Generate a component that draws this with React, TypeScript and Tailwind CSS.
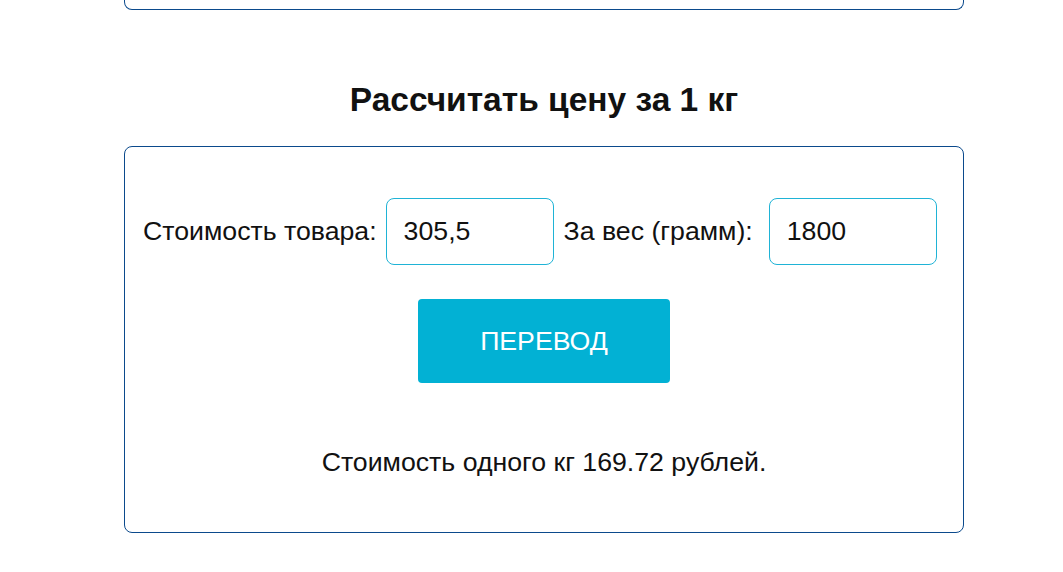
import React, { useState } from 'react';

export default function App() {
  const [price, setPrice] = useState('305,5');
  const [weight, setWeight] = useState('1800');

  return (
    <div className="min-h-screen bg-white font-['Liberation_Sans',Arial,sans-serif] text-[#111]">
      <div className="ml-[124px] w-[840px]">
        {/* previous block, scrolled off */}
        <div className="h-[10px] border border-t-0 border-[#0b4a8c] rounded-b-lg" />

        <h2 className="mt-[70px] text-center text-[33.5px] font-bold leading-[40px]">
          Рассчитать цену за 1 кг
        </h2>

        <div className="mt-[26px] border border-[#0b4a8c] rounded-lg px-[18px] pt-[51px] pb-[54px]">
          <div className="flex items-center text-[26.7px]">
            <label className="mr-[9px]">Стоимость товара:</label>
            <input
              value={price}
              onChange={(e) => setPrice(e.target.value)}
              className="w-[168px] h-[67px] border border-[#1fb3d6] rounded-lg px-[17px] text-[26.7px] outline-none"
            />
            <label className="ml-[10px] mr-[16px]">За вес (грамм):</label>
            <input
              value={weight}
              onChange={(e) => setWeight(e.target.value)}
              className="w-[168px] h-[67px] border border-[#1fb3d6] rounded-lg px-[17px] text-[26.7px] outline-none"
            />
          </div>

          <div className="flex justify-center mt-[34px]">
            <button className="w-[252px] h-[84px] bg-[#02b1d4] rounded text-white text-[26.7px]">
              ПЕРЕВОД
            </button>
          </div>

          <p className="mt-[63px] text-center text-[26.7px] leading-[32px]">
            Стоимость одного кг 169.72 рублей.
          </p>
        </div>
      </div>
    </div>
  );
}
